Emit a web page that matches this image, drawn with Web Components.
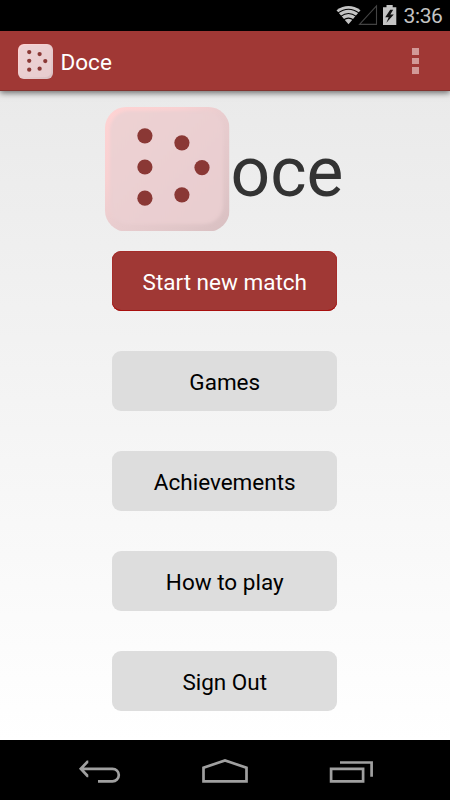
<!DOCTYPE html>
<html lang="en">
<head>
<meta charset="utf-8">
<title>Doce</title>
<style>
	body {
		margin: 0;
		font-family: Roboto, "Noto Sans", sans-serif;
	}
</style>
</head>
<body>
<doce-app></doce-app>

<script>
class DoceDie extends HTMLElement {
	constructor() {
		super();
		this.attachShadow({ mode: 'open' });
		this.shadowRoot.innerHTML = `
		<style>
			:host {
				display: block;
				width: 124.5px;
				height: 124.5px;
			}
			svg {
				display: block;
				width: 100%;
				height: 100%;
			}
		</style>
		<svg viewBox="0 0 124.5 124.5">
			<defs>
				<clipPath id="shape"><rect width="124.5" height="124.5" rx="21"/></clipPath>
				<linearGradient id="edge" x1="0" y1="0" x2="1" y2="1">
					<stop offset="0" stop-color="#ffd3d3"/>
					<stop offset=".3" stop-color="#f8d1d2"/>
					<stop offset=".5" stop-color="#e9cdcf"/>
					<stop offset=".8" stop-color="#e0c6c8"/>
					<stop offset="1" stop-color="#d8bfc1"/>
				</linearGradient>
				<linearGradient id="face" x1="0" y1="0" x2="1" y2="1">
					<stop offset="0" stop-color="#edd1d3"/>
					<stop offset="1" stop-color="#e8cdcf"/>
				</linearGradient>
				<filter id="soft"><feGaussianBlur stdDeviation="1.5"/></filter>
			</defs>
			<g clip-path="url(#shape)">
				<rect width="124.5" height="124.5" fill="url(#edge)"/>
				<rect x="5" y="4" width="113" height="113" rx="19" fill="url(#face)" filter="url(#soft)"/>
			</g>
			<g fill="#8a3835">
				<circle cx="39.9" cy="28.8" r="7.6"/>
				<circle cx="39.9" cy="60" r="7.6"/>
				<circle cx="39.9" cy="91.2" r="7.6"/>
				<circle cx="76.9" cy="35.8" r="7.6"/>
				<circle cx="97" cy="60.6" r="7.6"/>
				<circle cx="76.9" cy="87.8" r="7.6"/>
			</g>
		</svg>
		`
	}
}
customElements.define('doce-die', DoceDie);

class StatusBar extends HTMLElement {
	constructor() {
		super();
		this.attachShadow({ mode: 'open' });
		this.shadowRoot.innerHTML = `
		<style>
			:host {
				display: flex;
				justify-content: flex-end;
				box-sizing: border-box;
				height: 31px;
				padding-right: 7.5px;
				background: #000;
				color: #c4c4c4;
				font-size: 21px;
				letter-spacing: -.4px;
				line-height: 33px;
			}
			svg {
				flex: none;
				margin-right: 5.5px;
			}
		</style>
		<svg width="62" height="31" viewBox="0 0 62 31">
			<path d="M.5 10.2Q12.5 1.8 24.5 10.2L12.5 24.3Z" fill="#c4c4c4"/>
			<path d="M1.8 13.2Q12.5 5.3 23.2 13.2M4.7 16.4Q12.5 10.7 20.3 16.4M7.7 19.8Q12.5 16.4 17.3 19.8" fill="none" stroke="#000" stroke-width="1.05"/>
			<path d="M23.5 24.4H40.5V6Z" fill="none" stroke="#444" stroke-width="1.1"/>
			<path d="M47 7.2H50.5V5H56.7V7.2H60.3V25H47Z" fill="#c4c4c4"/>
			<path d="M54.2 9.8L49.2 17.2H52.7L50.4 22.8L57.8 14.4H54.3L57.2 9.8Z" fill="#111"/>
		</svg>
		<slot></slot>
		`
	}
}
customElements.define('status-bar', StatusBar);

class ActionBar extends HTMLElement {
	constructor() {
		super();
		this.attachShadow({ mode: 'open' });
		this.shadowRoot.innerHTML = `
		<style>
			:host {
				display: flex;
				align-items: center;
				box-sizing: border-box;
				height: 60px;
				padding: 1px 31.5px 0 18px;
				background: #a03835;
				border-bottom: 1px solid #823330;
				box-shadow: 0 2px 6px rgba(0, 0, 0, .55);
				color: #fff;
				font-size: 22.5px;
				z-index: 1;
			}
			doce-die {
				width: 35px;
				height: 35px;
				margin-right: 7.5px;
			}
			.title {
				flex: 1;
				padding-top: 2px;
			}
			.overflow {
				display: grid;
				gap: 3px;
			}
			.overflow i {
				width: 6.5px;
				height: 6.4px;
				background: #d29997;
			}
		</style>
		<doce-die></doce-die>
		<div class="title"><slot></slot></div>
		<div class="overflow"><i></i><i></i><i></i></div>
		`
	}
}
customElements.define('action-bar', ActionBar);

class MenuButton extends HTMLElement {
	constructor() {
		super();
		this.attachShadow({ mode: 'open' });
		this.shadowRoot.innerHTML = `
		<style>
			:host {
				display: flex;
				align-items: center;
				justify-content: center;
				box-sizing: border-box;
				width: 225px;
				height: 60px;
				padding-top: 2px;
				border-radius: 9px;
				background: #ddd;
				color: #000;
				font-size: 22.5px;
			}
			:host([primary]) {
				background: #a03835;
				box-shadow: inset 0 -1px #a80f0e, inset 0 0 0 1px #a52c2a;
				color: #fff;
			}
		</style>
		<slot></slot>
		`
	}
}
customElements.define('menu-button', MenuButton);

class NavBar extends HTMLElement {
	constructor() {
		super();
		this.attachShadow({ mode: 'open' });
		this.shadowRoot.innerHTML = `
		<style>
			:host {
				display: flex;
				justify-content: center;
				height: 60px;
				background: #000;
			}
			svg {
				width: 126px;
				height: 60px;
				fill: none;
				stroke: #a0a0a0;
				stroke-width: 2.7;
			}
		</style>
		<svg viewBox="0 0 126 60"><path d="M44.5 28.8H76.5A6.3 6.3 0 0 1 76.5 41.4H62M52.3 21.8H51.4L44.8 28.8L51.4 35.8H52.3"/></svg>
		<svg viewBox="0 0 126 60"><path d="M41.5 41.4V27.8L63 20.4L84.5 27.8V41.4Z"/></svg>
		<svg viewBox="0 0 126 60"><path d="M43.1 28.8H75.1V41.4H43.1ZM52 22.5H83.6V36.7"/></svg>
		`
	}
}
customElements.define('nav-bar', NavBar);

class DoceApp extends HTMLElement {
	constructor() {
		super();
		this.attachShadow({ mode: 'open' });
		this.shadowRoot.innerHTML = `
		<style>
			:host {
				display: flex;
				flex-direction: column;
				width: 450px;
				height: 800px;
				overflow: hidden;
			}
			main {
				flex: 1;
				display: flex;
				flex-direction: column;
				align-items: center;
				padding-top: 15.5px;
				background: linear-gradient(#eaeaea, #fff);
			}
			.logo {
				display: flex;
				width: 240px;
				height: 124.5px;
				margin-bottom: 20px;
				color: #333;
				font-size: 69.5px;
				line-height: 131px;
			}
			.logo doce-die {
				flex: none;
				margin-right: 1px;
			}
			.menu {
				display: grid;
				gap: 40px;
				margin-right: .5px;
			}
		</style>
		<status-bar>3:36</status-bar>
		<action-bar>Doce</action-bar>
		<main>
			<div class="logo"><doce-die></doce-die><span>oce</span></div>
			<div class="menu">
				<menu-button primary>Start new match</menu-button>
				<menu-button>Games</menu-button>
				<menu-button>Achievements</menu-button>
				<menu-button>How to play</menu-button>
				<menu-button>Sign Out</menu-button>
			</div>
		</main>
		<nav-bar></nav-bar>
		`
	}
}
customElements.define('doce-app', DoceApp);
</script>
</body>
</html>
